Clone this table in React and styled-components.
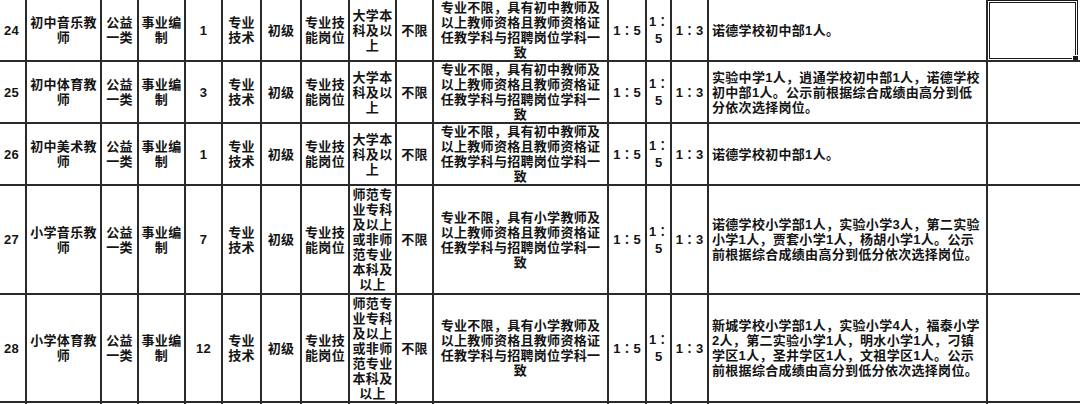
import React from "react";
import styled, { createGlobalStyle } from "styled-components";

const Global = createGlobalStyle`
  html, body { margin: 0; padding: 0; background: #fff; overflow: hidden; }
  body { width: 1080px; height: 404px; }
`;

const Sheet = styled.div`
  width: 1080px;
  height: 404px;
  overflow: hidden;
  background: #fff;
`;

const Table = styled.table`
  border-collapse: collapse;
  table-layout: fixed;
  width: 1084px;
  margin: -2px 0 0 -4px;
  font-family: "Liberation Sans", "Noto Sans CJK SC", sans-serif;
  font-size: 13px;
  font-weight: 700;
  line-height: 15px;
  color: #141414;
  letter-spacing: 0.3px;
`;

const Row = styled.tr`
  height: ${(p) => p.$h}px;
  & > td {
    border-top-color: ${(p) => (p.$sep ? "#8a8a8a" : "#2a2a2a")};
  }
`;

const Cell = styled.td`
  border: 2px solid #2a2a2a;
  padding: 0 ${(p) => (p.$left ? "3px" : "2px")};
  text-align: ${(p) => (p.$left ? "left" : "center")};
  vertical-align: middle;
  overflow: hidden;
  word-break: break-all;
  position: relative;
`;

const Ratio = styled.span`
  letter-spacing: 0;
  line-height: 17px;
`;

const Keep = styled.span`
  white-space: nowrap;
`;

const Selection = styled.div`
  position: absolute;
  top: 0;
  bottom: -1px;
  left: -1px;
  right: 2px;
  border: 3px double #1a1a1a;
  box-sizing: border-box;
`;

const Handle = styled.span`
  position: absolute;
  right: -4px;
  bottom: -4px;
  width: 5px;
  height: 5px;
  background: #1a1a1a;
  border: 1px solid #fff;
`;

const widths = [29, 75, 37, 47, 37, 39, 40, 48, 47, 37, 175, 38, 25, 37, 279, 94];

const juniorReq = "专业不限，具有初中教师及以上教师资格且教师资格证任教学科与招聘岗位学科一致";
const primaryReq = "专业不限，具有小学教师及以上教师资格且教师资格证任教学科与招聘岗位学科一致";
const college = "大学本科及以上";
const normal = "师范专业专科及以上或非师范专业本科及以上";

const rows = [
  { id: "24", name: "初中音乐教师", n: "1", edu: college, req: juniorReq, note: "诺德学校初中部1人。", h: 62, selected: true },
  { id: "25", name: "初中体育教师", n: "3", edu: college, req: juniorReq, note: "实验中学1人，逍通学校初中部1人，诺德学校初中部1人。公示前根据综合成绩由高分到低分依次选择岗位。", h: 62 },
  { id: "26", name: "初中美术教师", n: "1", edu: college, req: juniorReq, note: "诺德学校初中部1人。", h: 62 },
  { id: "27", name: "小学音乐教师", n: "7", edu: normal, req: primaryReq, note: "诺德学校小学部1人，实验小学3人，第二实验小学1人，贾套小学1人，杨胡小学1人。公示前根据综合成绩由高分到低分依次选择岗位。", h: 109 },
  { id: "28", name: "小学体育教师", n: "12", edu: normal, req: primaryReq, note: "新城学校小学部1人，实验小学4人，福泰小学2人，第二实验小学1人，明水小学1人，刁镇学区1人，圣井学区1人，文祖学区1人。公示前根据综合成绩由高分到低分依次选择岗位。", h: 108, sep: true },
];

const RatioText = ({ a, b }) => (
  <Ratio>
    <Keep>{a}∶</Keep>
    {b}
  </Ratio>
);

export default function App() {
  return (
    <Sheet>
      <Global />
      <Table>
        <colgroup>
          {widths.map((w, i) => (
            <col key={i} style={{ width: w }} />
          ))}
        </colgroup>
        <tbody>
          {rows.map((r) => (
            <Row key={r.id} $h={r.h} $sep={r.sep}>
              <Cell>{r.id}</Cell>
              <Cell>{r.name}</Cell>
              <Cell>公益一类</Cell>
              <Cell>事业编制</Cell>
              <Cell>{r.n}</Cell>
              <Cell>专业技术</Cell>
              <Cell>初级</Cell>
              <Cell>专业技能岗位</Cell>
              <Cell>{r.edu}</Cell>
              <Cell>不限</Cell>
              <Cell>{r.req}</Cell>
              <Cell><RatioText a="1" b="5" /></Cell>
              <Cell><RatioText a="1" b="5" /></Cell>
              <Cell><RatioText a="1" b="3" /></Cell>
              <Cell $left>{r.note}</Cell>
              <Cell>
                {r.selected && (
                  <Selection>
                    <Handle />
                  </Selection>
                )}
              </Cell>
            </Row>
          ))}
          <Row $h={12}>
            {widths.map((_, i) => (
              <Cell key={i} />
            ))}
          </Row>
        </tbody>
      </Table>
    </Sheet>
  );
}
